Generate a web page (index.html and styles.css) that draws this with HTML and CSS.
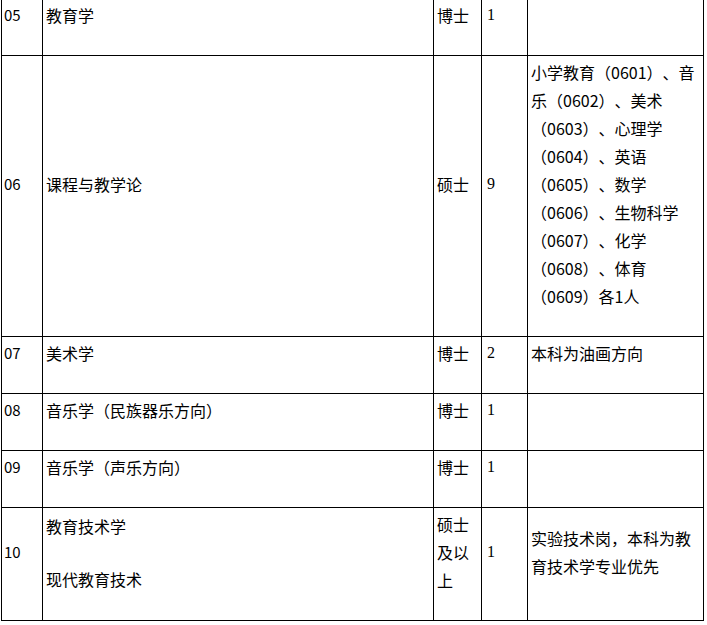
FILE: index.html
```html
<!DOCTYPE html>
<html lang="zh-CN">
<head>
<meta charset="utf-8">
<title>招聘岗位</title>
<link rel="stylesheet" href="styles.css">
</head>
<body>
<table class="posts">
  <colgroup>
    <col class="c-no">
    <col class="c-name">
    <col class="c-deg">
    <col class="c-num">
    <col class="c-note">
  </colgroup>
  <tbody>
    <tr>
      <td class="no">05</td>
      <td>教育学</td>
      <td>博士</td>
      <td class="num">1</td>
      <td></td>
    </tr>
    <tr>
      <td class="no">06</td>
      <td>课程与教学论</td>
      <td>硕士</td>
      <td class="num">9</td>
      <td>小学教育（0601）、音乐（0602）、美术（0603）、心理学（0604）、英语（0605）、数学（0606）、生物科学（0607）、化学（0608）、体育（0609）各1人</td>
    </tr>
    <tr>
      <td class="no">07</td>
      <td>美术学</td>
      <td>博士</td>
      <td class="num">2</td>
      <td>本科为油画方向</td>
    </tr>
    <tr>
      <td class="no">08</td>
      <td>音乐学（民族器乐方向）</td>
      <td>博士</td>
      <td class="num">1</td>
      <td></td>
    </tr>
    <tr>
      <td class="no">09</td>
      <td>音乐学（声乐方向）</td>
      <td>博士</td>
      <td class="num">1</td>
      <td></td>
    </tr>
    <tr>
      <td class="no">10</td>
      <td>
        <p class="line">教育技术学</p>
        <p class="line gap">现代教育技术</p>
      </td>
      <td>硕士及以上</td>
      <td class="num">1</td>
      <td>实验技术岗，本科为教育技术学专业优先</td>
    </tr>
  </tbody>
</table>
</body>
</html>
```
FILE: styles.css
```css
html, body {
  margin: 0;
  padding: 0;
  background: #ffffff;
}

body {
  font-family: "Noto Sans CJK SC", "Noto Sans", sans-serif;
  font-size: 16px;
  line-height: 28px;
  color: #000000;
  text-spacing-trim: space-all;
}

.posts {
  border-collapse: collapse;
  table-layout: fixed;
  width: 703px;
  margin: -2px 0 0 1px;
}

.c-no { width: 41px; }
.c-name { width: 391px; }
.c-deg { width: 48px; }
.c-num { width: 46px; }
.c-note { width: 176px; }

.posts td {
  border: 1px solid #000000;
  padding: 2px 3px 26px 3px;
  vertical-align: middle;
  text-align: left;
  line-break: strict;
  text-spacing-trim: space-all;
}

.posts td.no {
  padding-left: 2px;
  font-size: 15px;
}

.posts td.num {
  font-family: "Liberation Serif", "Noto Sans CJK SC", serif;
  padding-left: 5px;
}

.line {
  margin: 0;
}

.line.gap {
  margin-top: 25px;
}
```
